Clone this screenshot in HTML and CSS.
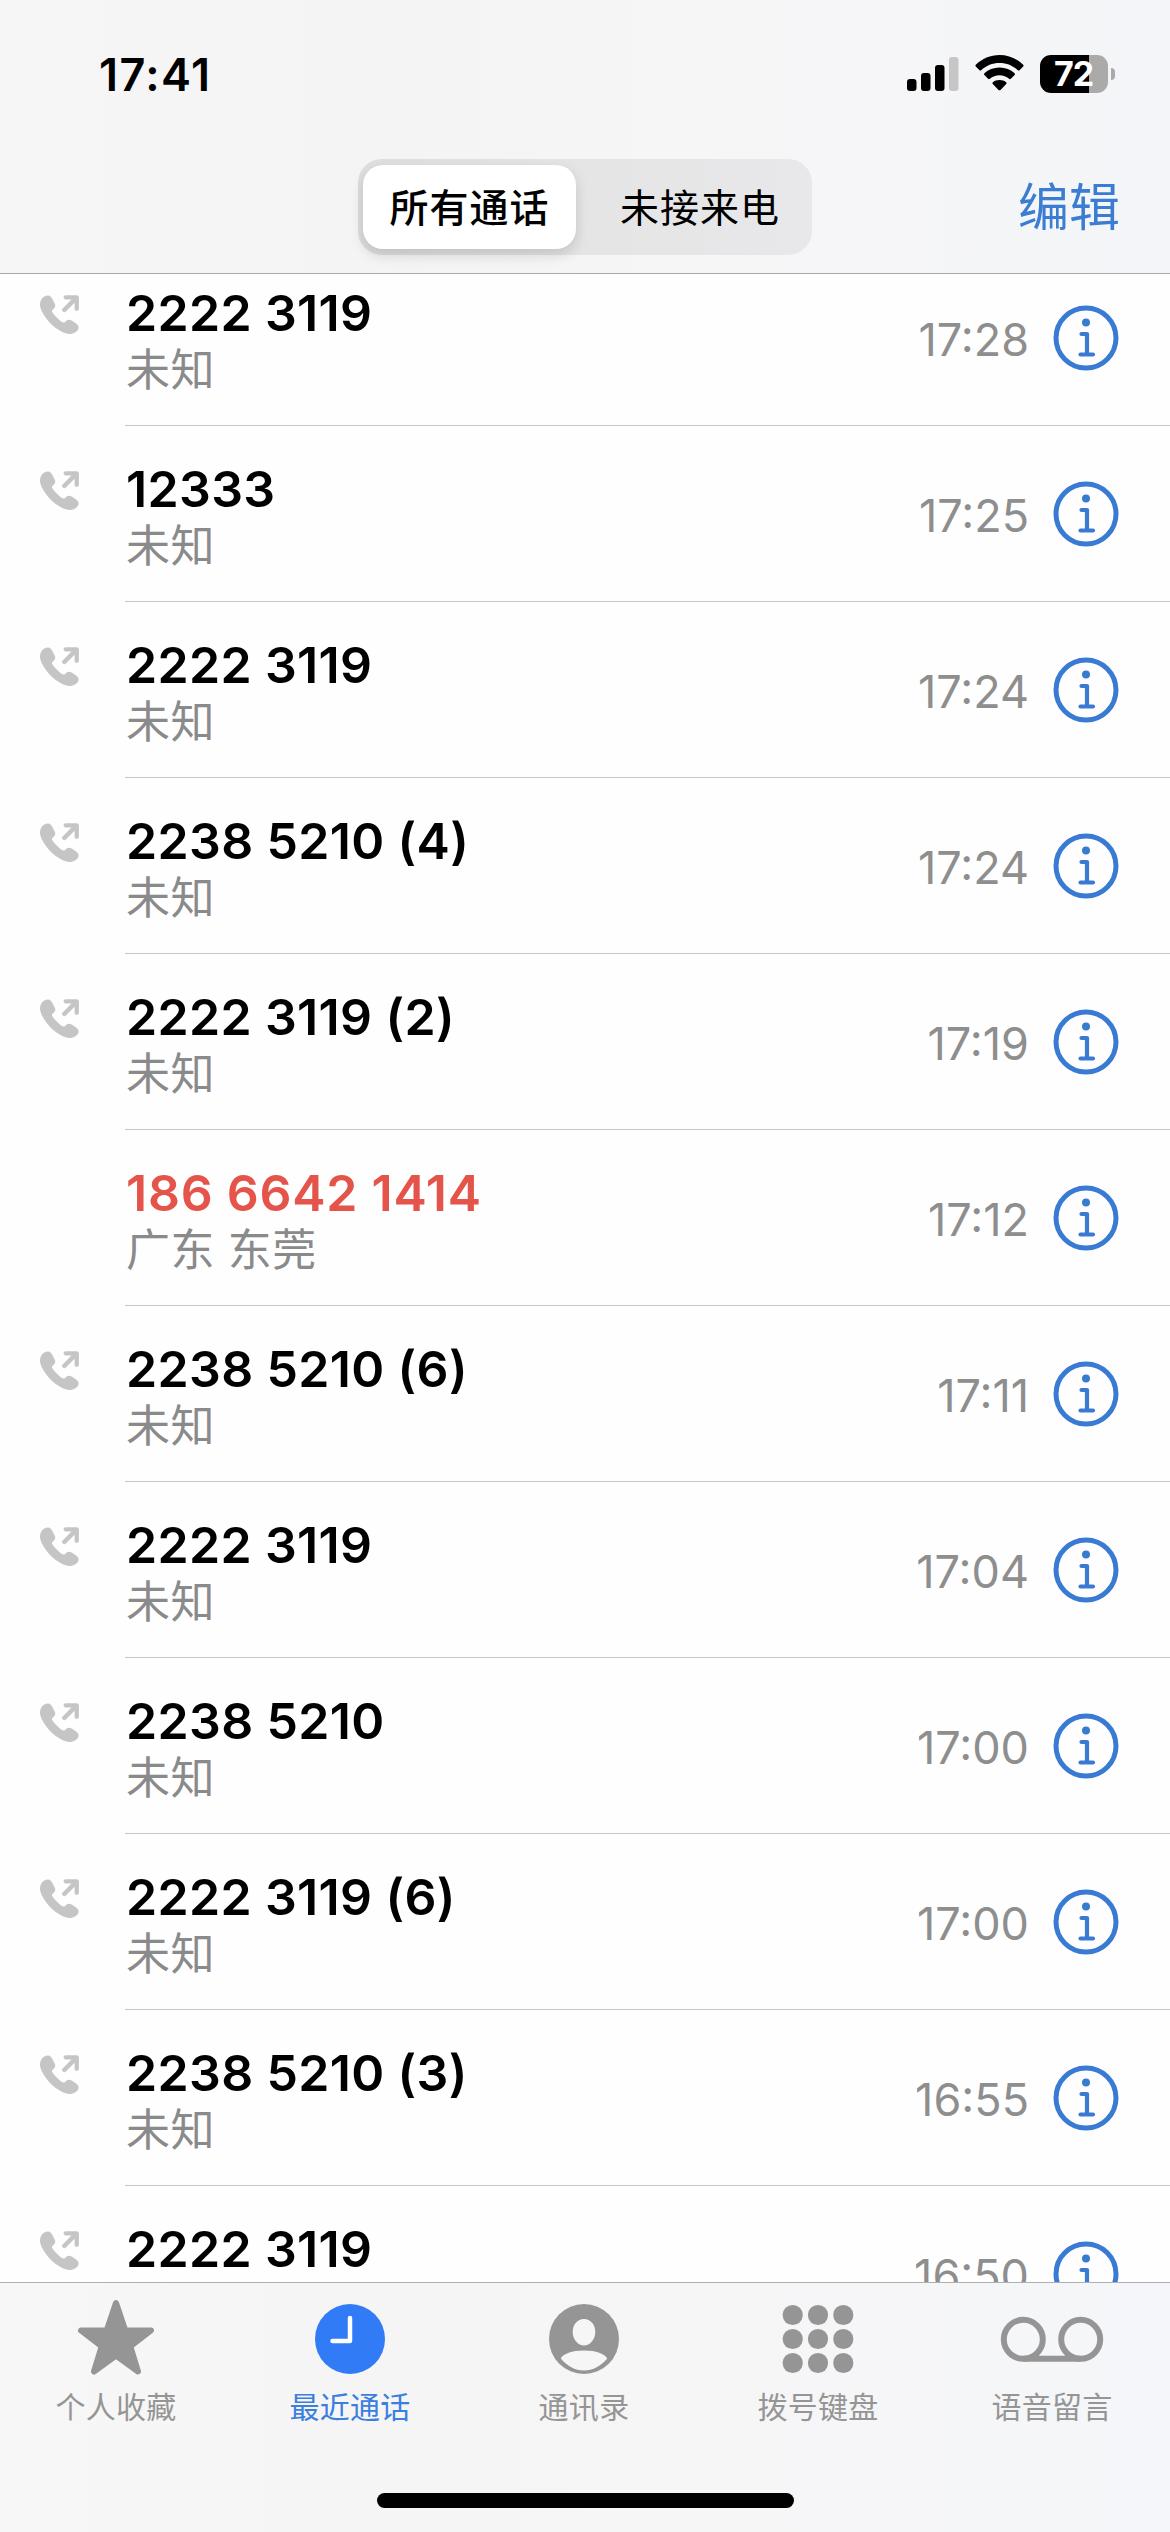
FILE: index.html
```html
<!DOCTYPE html>
<html lang="zh-CN">
<head>
<meta charset="utf-8">
<title>最近通话</title>
<link rel="stylesheet" href="styles.css">
</head>
<body>
<svg width="0" height="0" class="defs" aria-hidden="true">
  <symbol id="outgoing" viewBox="0 0 38 38">
    <path d="M8 0.6C4 0.3 0 4 0 9.5C0 15 6 23.500 11 28.500C17 34 24 38 29.500 38C34 38 37.800 34.500 37.600 31.500C37.500 29 35 27.500 31.500 25.300C28.500 23.300 26.500 24 24.600 26C23.600 27 22.800 27.200 21.500 26.300C18.500 24.500 14.500 20.300 12.200 17C11.400 15.700 11.500 15 12.600 14C15 12 15.400 10.500 14.200 8C12.500 4.500 11 0.800 8 0.600Z" fill="currentColor"/>
    <path d="M25 2.300H35.800V13.500M35.300 2.800L23.700 14.500" fill="none" stroke="currentColor" stroke-width="4.200" stroke-linecap="round" stroke-linejoin="round"/>
  </symbol>
  <symbol id="info" viewBox="0 0 66 66">
    <circle cx="33" cy="33" r="30" fill="none" stroke="currentColor" stroke-width="5"/>
    <circle cx="33" cy="17.500" r="4" fill="currentColor"/>
    <path d="M28.500 29H34V49.500M27.500 49.500H40" fill="none" stroke="currentColor" stroke-width="4.200" stroke-linecap="round" stroke-linejoin="round"/>
  </symbol>
</svg>
<div class="phone">
  <header class="header">
    <div class="status">
      <span class="clock">17:41</span>
      <div class="indicators">
        <svg class="signal" viewBox="0 0 52 36"><rect y="23" width="9.500" height="12" rx="3"/><rect x="14" y="17" width="9.500" height="18" rx="3"/><rect x="28" y="9" width="9.500" height="26" rx="3"/><rect x="42" y="1" width="9.500" height="34" rx="3" fill="#c6c6c6"/></svg>
        <svg class="wifi" viewBox="0 0 49 36"><path d="M24.500 0C15.500 0 7 3.700 .8 9.700Q0 10.600 .8 11.500L4.500 15.200Q5.300 16 6.200 15.200C11 10.600 17.500 8 24.500 8S38 10.600 42.800 15.200Q43.700 16 44.500 15.200L48.200 11.500Q49 10.600 48.200 9.700C42 3.700 33.500 0 24.500 0Z"/><path d="M24.500 12.500C18.500 12.500 13.300 14.700 9.400 18.300Q8.500 19.200 9.400 20.100L13.100 23.800Q14 24.600 14.900 23.800C17.500 21.500 20.800 20.300 24.500 20.300S31.500 21.500 34.100 23.800Q35 24.600 35.900 23.800L39.600 20.100Q40.500 19.200 39.600 18.300C35.700 14.700 30.500 12.500 24.500 12.500Z"/><path d="M24.500 25C21.800 25 19.500 25.900 17.800 27.300Q16.900 28.200 17.800 29.100L23.500 34.900Q24.500 35.800 25.500 34.900L31.200 29.100Q32.100 28.200 31.200 27.300C29.500 25.900 27.200 25 24.500 25Z"/></svg>
        <div class="battery"><span class="level">72</span><i class="nub"></i></div>
      </div>
    </div>
    <nav class="toolbar">
      <div class="segments"><span class="segment selected">所有通话</span><span class="segment other">未接来电</span></div>
      <a class="edit">编辑</a>
    </nav>
  </header>

  <main class="calls">
    <ul class="list">
      <li class="call"><svg class="dir"><use href="#outgoing"/></svg><div class="who"><b>2222 3119</b><span>未知</span></div><time>17:28</time><svg class="info"><use href="#info"/></svg></li>
      <li class="call"><svg class="dir"><use href="#outgoing"/></svg><div class="who"><b>12333</b><span>未知</span></div><time>17:25</time><svg class="info"><use href="#info"/></svg></li>
      <li class="call"><svg class="dir"><use href="#outgoing"/></svg><div class="who"><b>2222 3119</b><span>未知</span></div><time>17:24</time><svg class="info"><use href="#info"/></svg></li>
      <li class="call"><svg class="dir"><use href="#outgoing"/></svg><div class="who"><b>2238 5210 (4)</b><span>未知</span></div><time>17:24</time><svg class="info"><use href="#info"/></svg></li>
      <li class="call"><svg class="dir"><use href="#outgoing"/></svg><div class="who"><b>2222 3119 (2)</b><span>未知</span></div><time>17:19</time><svg class="info"><use href="#info"/></svg></li>
      <li class="call missed"><div class="who"><b>186 6642 1414</b><span>广东 东莞</span></div><time>17:12</time><svg class="info"><use href="#info"/></svg></li>
      <li class="call"><svg class="dir"><use href="#outgoing"/></svg><div class="who"><b>2238 5210 (6)</b><span>未知</span></div><time>17:11</time><svg class="info"><use href="#info"/></svg></li>
      <li class="call"><svg class="dir"><use href="#outgoing"/></svg><div class="who"><b>2222 3119</b><span>未知</span></div><time>17:04</time><svg class="info"><use href="#info"/></svg></li>
      <li class="call"><svg class="dir"><use href="#outgoing"/></svg><div class="who"><b>2238 5210</b><span>未知</span></div><time>17:00</time><svg class="info"><use href="#info"/></svg></li>
      <li class="call"><svg class="dir"><use href="#outgoing"/></svg><div class="who"><b>2222 3119 (6)</b><span>未知</span></div><time>17:00</time><svg class="info"><use href="#info"/></svg></li>
      <li class="call"><svg class="dir"><use href="#outgoing"/></svg><div class="who"><b>2238 5210 (3)</b><span>未知</span></div><time>16:55</time><svg class="info"><use href="#info"/></svg></li>
      <li class="call"><svg class="dir"><use href="#outgoing"/></svg><div class="who"><b>2222 3119</b></div><time>16:50</time><svg class="info"><use href="#info"/></svg></li>
    </ul>
  </main>

  <footer class="tabbar">
    <div class="tabs">
      <a class="tab"><svg class="glyph" viewBox="0 0 110 78"><path d="M55 6L64.300 33.500H90L69.300 49.500L77 74.500L55 58.500L33 74.500L40.700 49.500L20 33.500H45.700Z" fill="currentColor" stroke="currentColor" stroke-width="6" stroke-linejoin="round"/></svg>个人收藏</a>
      <a class="tab active"><svg class="glyph" viewBox="0 0 110 78"><circle cx="55" cy="42" r="35" fill="currentColor"/><path d="M55 21V44H37.500" fill="none" stroke="#fff" stroke-width="4.500" stroke-linecap="round" stroke-linejoin="round"/></svg><span>最近通话</span></a>
      <a class="tab"><svg class="glyph" viewBox="0 0 110 78"><circle cx="55" cy="42" r="35" fill="currentColor"/><path d="M55 22C61.500 22 66.300 27.500 66.300 35S61 48.500 55 48.500S43.700 42.500 43.700 35S48.500 22 55 22ZM31.800 61.500C34 57 43 53.500 55 53.500S76 57 78.200 61.500C72 69 64 73.500 55 73.500S38 69 31.800 61.500Z" fill="#f6f6f6"/></svg>通讯录</a>
      <a class="tab"><svg class="glyph" viewBox="0 0 110 78" fill="currentColor"><circle cx="29.700" cy="18" r="10.100"/><circle cx="55" cy="18" r="10.100"/><circle cx="80.300" cy="18" r="10.100"/><circle cx="29.700" cy="42" r="10.100"/><circle cx="55" cy="42" r="10.100"/><circle cx="80.300" cy="42" r="10.100"/><circle cx="29.700" cy="66" r="10.100"/><circle cx="55" cy="66" r="10.100"/><circle cx="80.300" cy="66" r="10.100"/></svg>拨号键盘</a>
      <a class="tab"><svg class="glyph" viewBox="0 0 110 78" fill="none" stroke="currentColor" stroke-width="6"><circle cx="26.300" cy="42.300" r="19.500"/><circle cx="83.700" cy="42.300" r="19.500"/><path d="M26.300 61.800H83.700"/></svg>语音留言</a>
    </div>
    <div class="home"></div>
  </footer>
</div>
</body>
</html>
```

FILE: styles.css
```css
* { box-sizing: border-box; }

body {
  margin: 0;
  font-family: Inter, "Noto Sans CJK SC", sans-serif;
  color: #000;
  background: #fefefe;
}

.defs { position: absolute; }

.phone {
  width: 1170px;
  height: 2532px;
  display: flex;
  flex-direction: column;
  overflow: hidden;
}

.header {
  flex: none;
  height: 274px;
  border-bottom: 1px solid #a9a9ab;
  background: linear-gradient(90deg, #f6f6f6, #f4f4f4 35%, #f6f6f7 60%, #f4f5f8);
}

.status {
  height: 149px;
  display: flex;
  justify-content: space-between;
  padding: 47px 55px 0 99px;
}

.clock {
  font-size: 45px;
  line-height: 56px;
  font-weight: 600;
  letter-spacing: 1.4px;
}

.indicators {
  display: flex;
  align-items: flex-start;
  padding-top: 8px;
}

.signal { width: 52px; height: 36px; margin: 1px 16px 0 0; }
.wifi { width: 49px; height: 36px; margin-right: 16px; }

.battery { display: flex; align-items: center; gap: 3px; }

.level {
  width: 68px;
  height: 38px;
  border-radius: 11px;
  background: linear-gradient(90deg, #000 49px, #aaa 49px);
  color: #fff;
  font-size: 34px;
  line-height: 38px;
  font-weight: 700;
  text-align: center;
  letter-spacing: -1px;
  padding-right: 1px;
}

.nub {
  width: 4px;
  height: 12px;
  border-radius: 0 6px 6px 0;
  background: #aaa;
}

.toolbar {
  display: grid;
  grid-template-columns: 1fr 454px 1fr;
  padding-top: 10px;
}

.segments {
  grid-column: 2;
  height: 96px;
  padding: 6px 5px;
  display: grid;
  grid-template-columns: 213px 1fr;
  border-radius: 24px;
  background: linear-gradient(90deg, #dedede, #e5e5e6 52%, #e8e8ea);
}

.segment {
  display: flex;
  align-items: center;
  justify-content: center;
  font-size: 39px;
  line-height: 58px;
  letter-spacing: 1px;
  padding-top: 1px;
}

.segment.selected {
  border-radius: 20px;
  background: #fff;
  font-weight: 500;
  box-shadow: 0 6px 14px rgba(0, 0, 0, .14);
}

.segment.other { padding-left: 17px; }

.edit {
  justify-self: end;
  padding: 11px 50px 0 0;
  font-size: 51px;
  line-height: 76px;
  color: #3b7dd3;
}

.calls { flex: 1; overflow: hidden; }

.list {
  list-style: none;
  margin: -24px 0 0;
  padding: 0;
}

.call {
  height: 176px;
  display: grid;
  grid-template-columns: 85px 1fr auto 66px;
  padding: 0 51px 0 40px;
  background: linear-gradient(#c6c6c8, #c6c6c8) 125px 100% / 100% 1px no-repeat;
}

.dir {
  width: 39px;
  height: 39px;
  margin-top: 45px;
  color: #c5c5c5;
}

.who {
  grid-column: 2;
  padding: 33px 0 0 1px;
  display: flex;
  flex-direction: column;
}

.who b {
  font-size: 50px;
  line-height: 60px;
  font-weight: 600;
  letter-spacing: .35px;
}

.who span {
  margin-top: 1px;
  font-size: 44px;
  line-height: 52px;
  letter-spacing: .5px;
  color: #8a8a8a;
}

.missed b {
  color: #e5544b;
  letter-spacing: .75px;
}

.call time {
  padding: 62px 24px 0 0;
  font-size: 45px;
  line-height: 56px;
  color: #8e8e8e;
}

.info {
  width: 66px;
  height: 66px;
  margin-top: 55px;
  color: #397bd3;
}

.tabbar {
  flex: none;
  height: 250px;
  border-top: 1px solid #b0b0b1;
  background: linear-gradient(90deg, #f7f7f7, #f5f5f5 30%, #f6f6f7 60%, #f5f6f9);
}

.tabs {
  height: 210px;
  display: grid;
  grid-template-columns: repeat(5, 234px);
  margin-left: -1px;
  padding-top: 14px;
}

.tab {
  display: flex;
  flex-direction: column;
  align-items: center;
  font-size: 30px;
  line-height: 44px;
  letter-spacing: .3px;
  color: #959595;
}

.tab.active { color: #327bf7; }
.tab.active span { color: #3b7fe0; }

.glyph { width: 110px; height: 78px; margin-bottom: 10px; }

.home {
  width: 417px;
  height: 15px;
  margin: 0 auto;
  border-radius: 8px;
  background: #000;
}
```
